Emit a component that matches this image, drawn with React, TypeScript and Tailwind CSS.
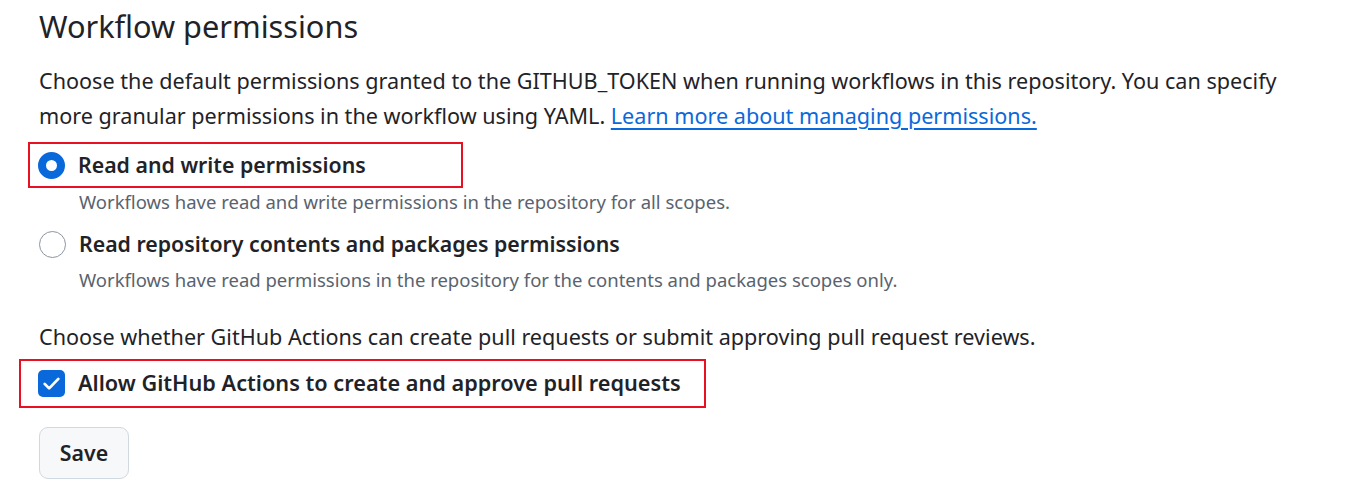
import React from 'react';

export default function App() {
  return (
    <div className="min-h-screen bg-white pl-[39px] text-[#1f2328]" style={{ fontFamily: '"Noto Sans", "Liberation Sans", sans-serif' }}>
      <h2 className="h-[52px] flex items-center text-[30.7px] font-normal leading-none">Workflow permissions</h2>

      <p className="mt-[11px] text-[21.6px] leading-[35px] w-[1290px]">
        Choose the default permissions granted to the GITHUB_TOKEN when running workflows in this repository. You can specify
        <br />
        more granular permissions in the workflow using YAML.{' '}
        <a href="#" className="text-[#0969da] underline underline-offset-4">Learn more about managing permissions.</a>
      </p>

      <div className="mt-[9px] -ml-[11px] flex h-[46px] w-[435px] items-center gap-[13px] border-2 border-[#e81123] pl-[8px]">
        <span className="h-[27px] w-[27px] shrink-0 rounded-full border-[8px] border-[#0969da] bg-white" />
        <span className="text-[21.3px] font-semibold">Read and write permissions</span>
      </div>
      <p className="ml-[40px] text-[18.5px] leading-[28px] text-[#59636e]">
        Workflows have read and write permissions in the repository for all scopes.
      </p>

      <div className="mt-[5px] flex h-[46px] items-center gap-[13px]">
        <span className="h-[27px] w-[27px] shrink-0 rounded-full border border-[#8c959f] bg-white" />
        <span className="text-[21.3px] font-semibold">Read repository contents and packages permissions</span>
      </div>
      <p className="-mt-[1px] ml-[40px] text-[18.5px] leading-[28px] text-[#59636e]">
        Workflows have read permissions in the repository for the contents and packages scopes only.
      </p>

      <p className="mt-[25px] text-[21.6px] leading-[35px]">
        Choose whether GitHub Actions can create pull requests or submit approving pull request reviews.
      </p>

      <div className="mt-[5px] -ml-[20px] flex h-[49px] w-[687px] items-center gap-[13px] border-2 border-[#e81123] pl-[17px]">
        <span className="flex h-[27px] w-[27px] shrink-0 items-center justify-center rounded-[5px] bg-[#0969da]">
          <svg width="21" height="21" viewBox="0 0 16 16" fill="none">
            <path d="M2.8 8.3l3.4 3.4 7-7.2" stroke="white" strokeWidth="2.1" strokeLinecap="round" strokeLinejoin="round" />
          </svg>
        </span>
        <span className="text-[21.7px] font-semibold">Allow GitHub Actions to create and approve pull requests</span>
      </div>

      <button className="mt-[19px] flex h-[52px] w-[90px] items-center justify-center rounded-[9px] border border-[#d1d9e0] bg-[#f6f8fa] text-[21.3px] font-semibold text-[#1f2328]">
        Save
      </button>
    </div>
  );
}
